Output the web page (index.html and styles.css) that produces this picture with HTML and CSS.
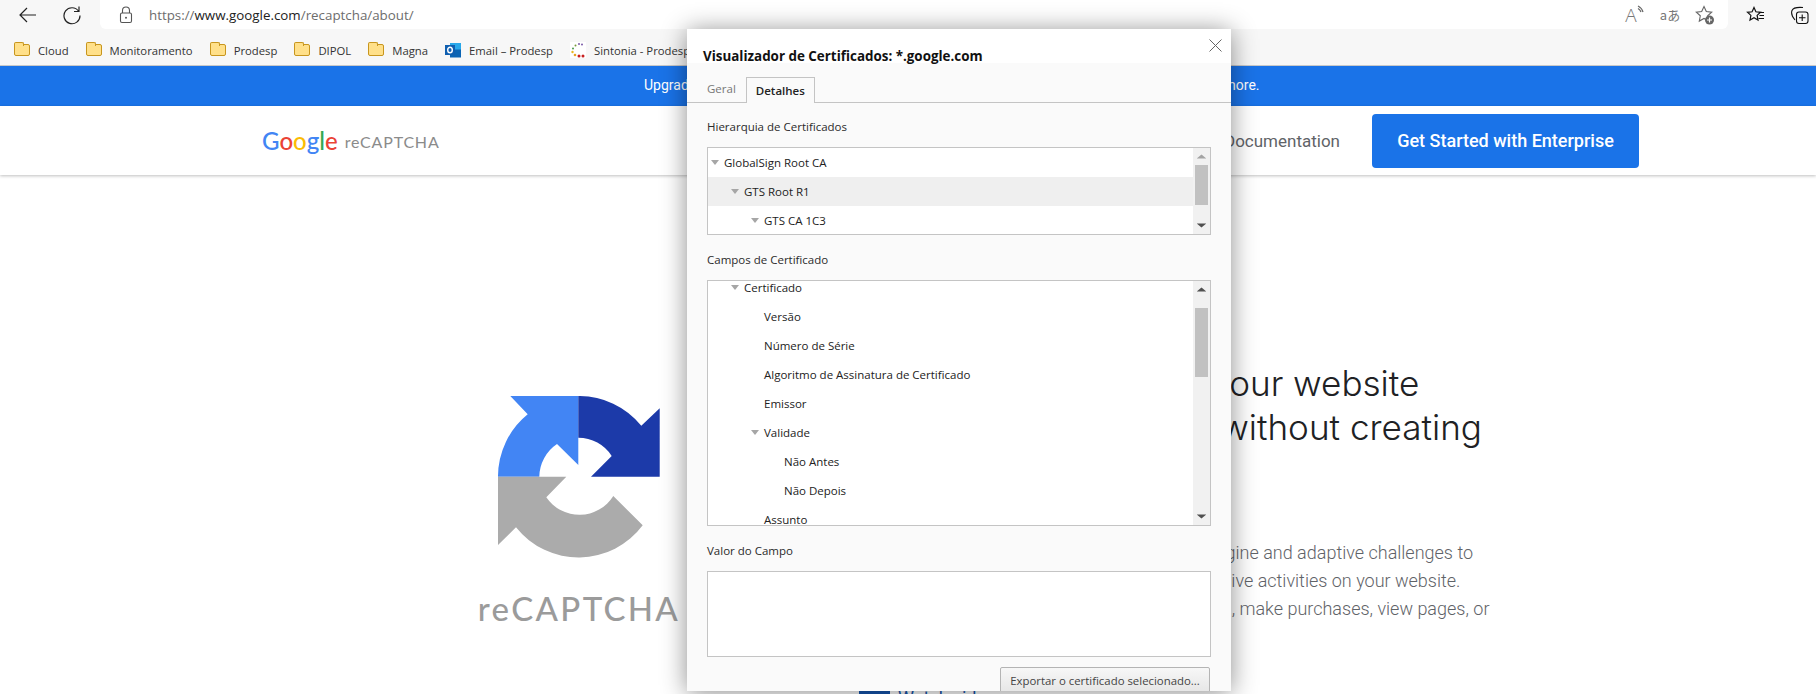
FILE: index.html
```html
<!DOCTYPE html>
<html lang="en">
<head>
    <meta charset="UTF-8">
    <meta name="viewport" content="width=device-width, initial-scale=1.0">
    <title>reCAPTCHA</title>
    <link rel="stylesheet" href="styles.css">
</head>
<body>

<header class="browser">
    <div class="toolbar">
        <span class="tool">
            <svg width="20" height="20" viewBox="0 0 20 20"><path d="M18 10H2M9 3l-7 7 7 7" fill="none" stroke="#222" stroke-width="1.2"/></svg>
        </span>
        <span class="tool">
            <svg width="20" height="20" viewBox="0 0 20 20"><path d="M16.6 6.2A8 8 0 1 0 18 10.500M17 1.500v5h-5" fill="none" stroke="#222" stroke-width="1.2"/></svg>
        </span>
        <div class="address">
            <svg class="lock" width="16" height="18" viewBox="0 0 16 18"><path d="M4.500 7V4.500a3.500 3.500 0 0 1 7 0V7" fill="none" stroke="#555" stroke-width="1.100"/><rect x="2.500" y="7" width="11" height="9.500" rx="1.500" fill="none" stroke="#555" stroke-width="1.100"/><circle cx="8" cy="11.800" r="1" fill="#555"/></svg>
            <span class="url">https://<b>www.google.com</b>/recaptcha/about/</span>
            <div class="address-icons">
                <span class="slot"><i class="read-a">A</i><svg class="read-waves" width="8" height="10" viewBox="0 0 8 10"><path d="M1 1q4 2 5 6M1 3.500q2 1 3 3.500" fill="none" stroke="#666" stroke-width="1.200"/></svg></span>
                <span class="slot translate">aあ</span>
                <span class="slot">
                    <svg width="20" height="20" viewBox="0 0 20 20"><path d="M9 1.500l2.300 5 5.400.6-4 3.700 1 5.300L9 13.500l-4.700 2.600 1-5.300-4-3.700 5.400-.6z" fill="none" stroke="#666" stroke-width="1.100"/><circle cx="14.500" cy="15" r="4.500" fill="#666"/><path d="M14.500 12.500v5M12 15h5" stroke="#fff" stroke-width="1.200"/></svg>
                </span>
            </div>
        </div>
        <span class="tool tool-fav">
            <svg width="20" height="20" viewBox="0 0 20 20"><path d="M8 2.500l1.900 4.300 4.600.5-3.400 3.100.9 4.600L8 12.700 4 15l.9-4.600L1.500 7.300l4.600-.5z" fill="none" stroke="#111" stroke-width="1.200"/><path d="M13 7.500h5M13.500 10.500h4.500M12.500 13.500h5.500" stroke="#111" stroke-width="1.100"/></svg>
        </span>
        <span class="tool tool-coll">
            <svg width="20" height="20" viewBox="0 0 20 20"><path d="M5 15C2.500 12 1 8 2 5.500 3 3 7 2 13 2.500" fill="none" stroke="#111" stroke-width="1.100"/><rect x="6.500" y="7" width="11.500" height="11.500" rx="2.500" fill="#f7f7f7" stroke="#111" stroke-width="1.100"/><path d="M12.200 9.500v6.500M9 12.700h6.500" stroke="#111" stroke-width="1.100"/></svg>
        </span>
    </div>

    <nav class="bookmarks">
        <a class="mark"><span class="folder"></span>Cloud</a>
        <a class="mark"><span class="folder"></span>Monitoramento</a>
        <a class="mark"><span class="folder"></span>Prodesp</a>
        <a class="mark"><span class="folder"></span>DIPOL</a>
        <a class="mark"><span class="folder"></span>Magna</a>
        <a class="mark">
            <svg class="fav" width="16" height="16" viewBox="0 0 16 16"><rect x="5" y="1" width="11" height="13" fill="#28a8ea"/><rect x="5" y="7.500" width="11" height="8" fill="#0a64b4"/><rect x="0" y="3" width="10" height="10" fill="#0f5fb0"/><ellipse cx="5" cy="8" rx="2.300" ry="2.800" fill="none" stroke="#fff" stroke-width="1.400"/></svg>
            Email – Prodesp
        </a>
        <a class="mark">
            <svg class="fav" width="16" height="16" viewBox="0 0 16 16"><rect width="16" height="16" fill="#fff"/><circle cx="9" cy="2" r="1" fill="#7a5aa8"/><circle cx="12" cy="2.500" r="1" fill="#7a5aa8"/><circle cx="5.500" cy="3.500" r="1" fill="#7a9a3a"/><circle cx="3" cy="6.500" r="1" fill="#4a9a4a"/><circle cx="2.500" cy="10" r="1.200" fill="#e8b820"/><circle cx="5" cy="13" r="1.300" fill="#e8a020"/><circle cx="9" cy="14" r="1.500" fill="#c82020"/><circle cx="13" cy="14" r="1.500" fill="#c82020"/></svg>
            Sintonia - Prodesp
        </a>
    </nav>
</header>

<div class="banner">Upgrade to reCAPTCHA Enterprise for additional fraud protection features. Click here to learn more.</div>

<div class="site-nav">
    <a class="brand">
        <span class="google"><i class="c-blue">G</i><i class="c-red">o</i><i class="c-yellow">o</i><i class="c-blue">g</i><i class="c-green">l</i><i class="c-red">e</i></span>
        <span class="brand-name">reCAPTCHA</span>
    </a>
    <a class="nav-link">Documentation</a>
    <a class="btn-primary">Get Started with Enterprise</a>
</div>

<main class="hero">
    <div class="hero-logo">
        <svg width="162" height="162" viewBox="0 0 162 162">
            <path d="M12.300 0H80.300V69L59 48A40 40 0 0 0 41.300 80.700H0A80 80 0 0 1 29.700 18.300Z" fill="#4285f4"/>
            <path d="M80.300 0A80 80 0 0 1 143.300 29.700L161.700 12.300V80.700H93L113.700 60A40 40 0 0 0 80.300 41.700Z" fill="#1c3aa9"/>
            <path d="M0 80.700H68.300L48.300 101.300A40 40 0 0 0 115.300 100L144.700 129.300A80 80 0 0 1 18 131.300L0 149Z" fill="#ababab"/>
        </svg>
        <div class="hero-logo-name">reCAPTCHA</div>
    </div>
    <div class="hero-text">
        <h1>reCAPTCHA protects your website<br>from fraud and abuse without creating<br>friction</h1>
        <p>reCAPTCHA uses an advanced risk analysis engine and adaptive challenges to<br>keep malicious software from engaging in abusive activities on your website.<br>Meanwhile, legitimate users will be able to login, make purchases, view pages, or<br>create accounts and fake users will be blocked.</p>
        <a class="watch"><span class="watch-icon"></span>Watch video</a>
    </div>
</main>

<div class="dialog">
    <button class="close">
        <svg width="13" height="13" viewBox="0 0 13 13"><path d="M.5.5l12 12M12.500.5l-12 12" stroke="#666" stroke-width="1"/></svg>
    </button>
    <div class="dialog-head">Visualizador de Certificados: *.google.com</div>
    <div class="tabs">
        <span class="tab">Geral</span>
        <span class="tab active">Detalhes</span>
    </div>
    <div class="dialog-body">
        <div class="label">Hierarquia de Certificados</div>
        <div class="list list-tree">
            <div class="rows">
                <div class="row open">GlobalSign Root CA</div>
                <div class="row open lvl-1 selected">GTS Root R1</div>
                <div class="row open lvl-2">GTS CA 1C3</div>
            </div>
            <div class="scrollbar">
                <span class="arrow up"></span>
                <span class="thumb thumb-tree"></span>
                <span class="arrow down"></span>
            </div>
        </div>

        <div class="label">Campos de Certificado</div>
        <div class="list list-fields">
            <div class="rows rows-scrolled">
                <div class="row open lvl-1">Certificado</div>
                <div class="row lvl-2">Versão</div>
                <div class="row lvl-2">Número de Série</div>
                <div class="row lvl-2">Algoritmo de Assinatura de Certificado</div>
                <div class="row lvl-2">Emissor</div>
                <div class="row open lvl-2">Validade</div>
                <div class="row lvl-3">Não Antes</div>
                <div class="row lvl-3">Não Depois</div>
                <div class="row lvl-2">Assunto</div>
            </div>
            <div class="scrollbar">
                <span class="arrow up"></span>
                <span class="thumb thumb-fields"></span>
                <span class="arrow down"></span>
            </div>
        </div>

        <div class="label">Valor do Campo</div>
        <div class="list list-value"></div>

        <div class="actions">
            <button class="export">Exportar o certificado selecionado...</button>
        </div>
    </div>
</div>

</body>
</html>
```

FILE: styles.css
```css
* {
    box-sizing: border-box;
    margin: 0;
    padding: 0;
}
html, body {
    height: 694px;
    overflow: hidden;
}
body {
    position: relative;
    background: white;
    font-family: "Roboto", sans-serif;
}
i {
    font-style: normal;
}

/* browser chrome */
.browser {
    height: 66px;
    background: #f7f7f7;
    border-bottom: 1px solid #c9c9c9;
    font-family: "Open Sans", sans-serif;
}
.toolbar {
    display: flex;
    height: 35px;
    padding-left: 16px;
    gap: 20px;
}
.tool {
    display: flex;
    justify-content: center;
    align-items: center;
    width: 24px;
    height: 29px;
}
.address {
    display: flex;
    flex: 1;
    align-items: center;
    height: 29px;
    margin-left: -4px;
    padding: 0 13px 0 18px;
    background: white;
    border-radius: 0 0 6px 6px;
}
.lock {
    margin-right: 15px;
}
.url {
    flex: 1;
    font-size: 13.350px;
    color: #6d6d6d;
}
.url b {
    font-weight: 400;
    color: #222;
}
.address-icons {
    display: flex;
    gap: 15px;
}
.slot {
    display: flex;
    justify-content: center;
    align-items: center;
    width: 20px;
    height: 20px;
    color: #777;
}
.read-a {
    font-size: 19px;
    font-weight: 300;
    line-height: 20px;
}
.read-waves {
    margin-bottom: 9px;
}
.translate {
    font-family: "Noto Sans CJK JP", "Open Sans", sans-serif;
    font-size: 13px;
    white-space: nowrap;
}
.tool-fav {
    margin-left: -4px;
}
.tool-coll {
    margin-right: 4px;
}
.bookmarks {
    display: flex;
    align-items: center;
    height: 30px;
    padding-left: 14px;
    gap: 17px;
    font-size: 11.300px;
    color: #333;
    white-space: nowrap;
}
.mark {
    display: flex;
    align-items: center;
    gap: 8px;
}
.folder {
    position: relative;
    width: 16px;
    height: 12px;
    background: #ffe08a;
    border: 1px solid #c8961e;
    border-radius: 2px;
}
.folder::before {
    content: "";
    position: absolute;
    top: -3px;
    left: -1px;
    width: 8px;
    height: 3px;
    background: #ffe08a;
    border: 1px solid #c8961e;
    border-bottom: none;
    border-radius: 2px 2px 0 0;
}

/* page */
.banner {
    height: 40px;
    padding-left: 644px;
    line-height: 39px;
    background: #1a73e8;
    color: white;
    font-size: 14px;
    white-space: nowrap;
}
.site-nav {
    display: flex;
    align-items: center;
    height: 69px;
    padding: 0 177px 0 262px;
    background: white;
    box-shadow: 0 1px 3px rgba(0, 0, 0, 0.25);
}
.brand {
    display: flex;
    align-items: center;
    gap: 7px;
    margin-right: auto;
}
.google {
    font-family: "Lato", sans-serif;
    font-size: 24px;
    font-weight: 500;
}
.c-blue { color: #4285f4; }
.c-red { color: #ea4335; }
.c-yellow { color: #fbbc05; }
.c-green { color: #34a853; }
.brand-name {
    margin-top: 1px;
    font-family: "Lato", sans-serif;
    font-size: 16px;
    letter-spacing: 0.8px;
    color: #8b8b8b;
}
.nav-link {
    margin-right: 32px;
    font-size: 17px;
    color: #5f6368;
}
.btn-primary {
    display: flex;
    justify-content: center;
    align-items: center;
    width: 267px;
    height: 54px;
    background: #1a73e8;
    border-radius: 4px;
    color: white;
    font-size: 18px;
    font-weight: 500;
}
.hero {
    display: flex;
    padding: 186px 0 0 479px;
}
.hero-logo {
    display: flex;
    flex-direction: column;
    align-items: center;
    width: 200px;
    margin-top: 35px;
}
.hero-logo-name {
    margin-top: 30px;
    font-family: "Lato", sans-serif;
    font-size: 33px;
    font-weight: 500;
    letter-spacing: 2.300px;
    color: #9b9b9b;
    white-space: nowrap;
}
.hero-text {
    margin-left: 180px;
    white-space: nowrap;
}
.hero-text h1 {
    font-family: "Inter", sans-serif;
    font-size: 35.100px;
    font-weight: 350;
    line-height: 44px;
    color: #202124;
}
.hero-text p {
    margin-top: 46px;
    font-size: 18px;
    font-weight: 300;
    line-height: 28px;
    color: #5f6368;
}
.watch {
    display: flex;
    gap: 8px;
    margin-top: 40px;
    font-size: 18px;
    line-height: 14px;
    color: #1557b0;
}
.watch-icon {
    width: 31px;
    height: 30px;
    background: #1557b0;
}

/* certificate dialog */
.dialog {
    position: absolute;
    top: 29px;
    left: 687px;
    width: 544px;
    height: 662px;
    overflow: hidden;
    background: #fafafa;
    box-shadow: 0 2px 24px rgba(0, 0, 0, 0.45);
    font-family: "Open Sans", sans-serif;
    font-size: 11.500px;
    color: #2b2b2b;
}
.close {
    position: absolute;
    top: 10px;
    right: 9px;
    display: flex;
    background: none;
    border: none;
}
.dialog-head {
    height: 34px;
    padding: 18px 0 0 16px;
    background: white;
    font-size: 13.400px;
    font-weight: 700;
    line-height: 18px;
    color: #111;
    white-space: nowrap;
}
.tabs {
    display: flex;
    align-items: flex-end;
    gap: 10px;
    height: 40px;
    padding-left: 20px;
    border-bottom: 1px solid #c4c4c4;
}
.tab {
    height: 26px;
    line-height: 26px;
    color: #777;
}
.tab.active {
    height: 26px;
    margin-bottom: -1px;
    padding: 0 9px;
    background: #fafafa;
    border: 1px solid #c4c4c4;
    border-bottom: none;
    color: #222;
    font-weight: 600;
}
.dialog-body {
    padding: 14px 20px 0;
}
.label {
    height: 20px;
    margin-bottom: 10px;
    line-height: 20px;
}
.list {
    display: flex;
    margin-bottom: 15px;
    overflow: hidden;
    background: white;
    border: 1px solid #c4c4c4;
}
.list-tree {
    height: 88px;
}
.list-fields {
    height: 246px;
}
.list-value {
    height: 86px;
    margin-bottom: 10px;
}
.rows {
    flex: 1;
}
.rows-scrolled {
    margin-top: -8px;
}
.row {
    display: flex;
    align-items: center;
    height: 29px;
    color: #222;
}
.row::before {
    content: "";
    flex: none;
    width: 8px;
    height: 5px;
    margin: 0 5px 0 3px;
}
.row.open::before {
    background: #a6a6a6;
    clip-path: polygon(0 0, 100% 0, 50% 100%);
}
.row.selected {
    background: #efefef;
}
.lvl-1 { padding-left: 20px; }
.lvl-2 { padding-left: 40px; }
.lvl-3 { padding-left: 60px; }
.scrollbar {
    display: flex;
    flex: none;
    flex-direction: column;
    align-items: center;
    width: 17px;
    background: #f1f1f1;
}
.arrow {
    flex: none;
    width: 17px;
    height: 17px;
    background: #505050;
}
.arrow.up {
    background: #a3a3a3;
    clip-path: polygon(50% 38%, 78% 62%, 22% 62%);
}
.list-fields .arrow.up {
    background: #505050;
}
.arrow.down {
    margin-top: auto;
    clip-path: polygon(22% 38%, 78% 38%, 50% 62%);
}
.thumb {
    flex: none;
    width: 13px;
    background: #c1c1c1;
}
.thumb-tree {
    height: 40px;
}
.thumb-fields {
    height: 69px;
    margin-top: 10px;
}
.actions {
    display: flex;
    justify-content: flex-end;
    padding-right: 1px;
}
.export {
    width: 210px;
    height: 26px;
    background: linear-gradient(#f7f7f7, #e6e6e6);
    border: 1px solid #b4b4b4;
    border-radius: 2px;
    font-family: inherit;
    font-size: 11.400px;
    color: #444;
}
```
